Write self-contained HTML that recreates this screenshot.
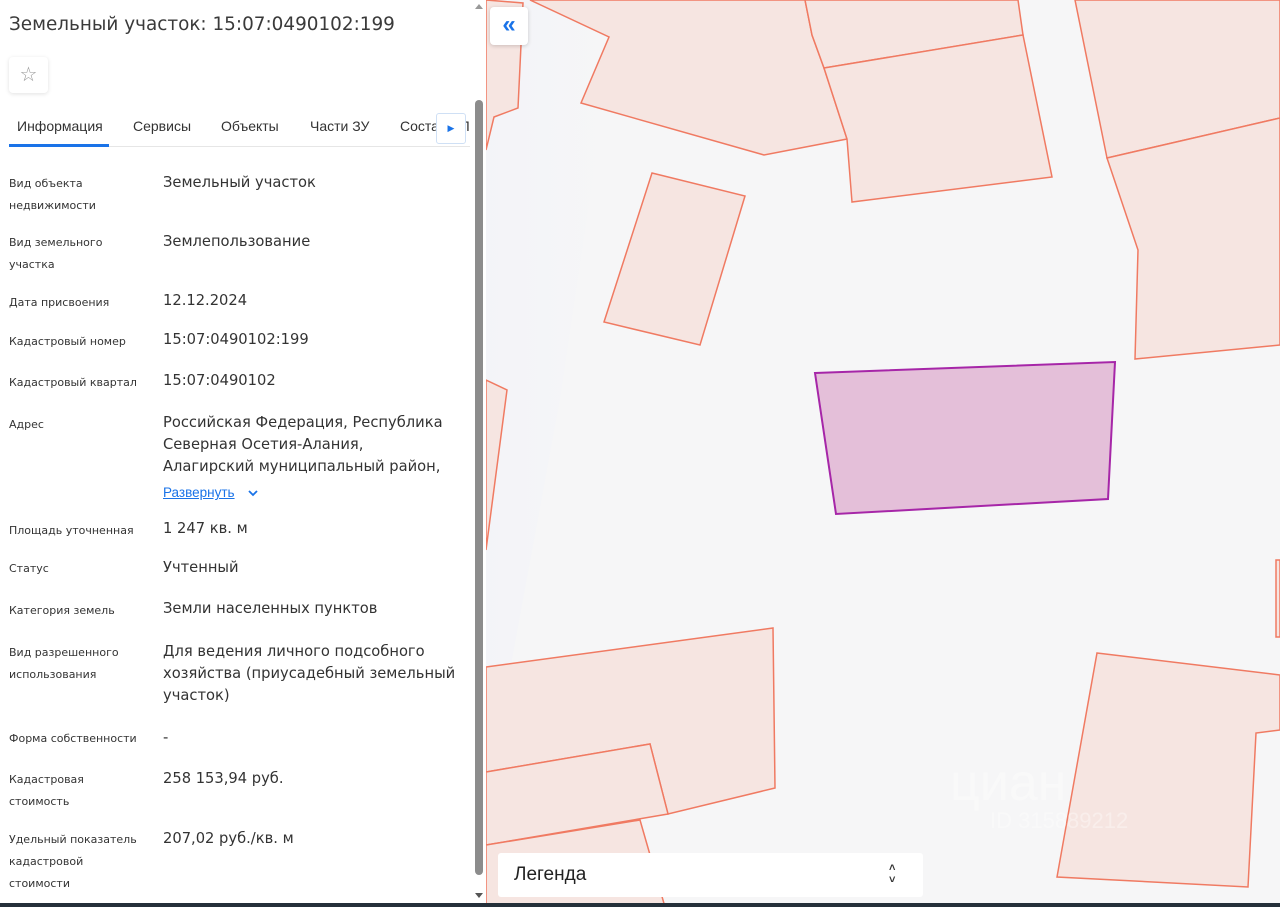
<!DOCTYPE html>
<html><head><meta charset="utf-8"><style>
*{margin:0;padding:0;box-sizing:border-box}
body{width:1280px;height:907px;overflow:hidden;position:relative;background:#f6f6f7;font-family:"Liberation Sans",Arial,sans-serif;color:#333}
#map{position:absolute;left:486px;top:0}
#panel{position:absolute;left:0;top:0;width:486px;height:907px;background:#fff}
.t{position:absolute;white-space:nowrap;line-height:22px}
.l{font-size:11px;color:#333;left:9px;font-family:"DejaVu Sans",sans-serif}
.v{font-size:14.7px;color:#333;left:163px;font-family:"DejaVu Sans",sans-serif}
</style></head><body>
<svg id="map" width="794" height="907" viewBox="486 0 794 907">
<defs><linearGradient id="g" x1="0" x2="1"><stop offset="0" stop-color="#eef0fa"/><stop offset="1" stop-color="#f6f6f7"/></linearGradient></defs>
<rect x="486" y="0" width="794" height="907" fill="#f6f6f7"/>
<polygon points="486,0 620,0 560,400 486,800" fill="url(#g)" opacity="0.35"/>
<g fill="#f6e5e1" stroke="#f07a62" stroke-width="1.5">
<polygon points="486,0 523,3 518,108 494,117 486,150"/>
<polygon points="530,0 805,0 812,35 824,68 847,139 764,155 581,103 609,37"/>
<polygon points="805,0 1018,0 1023,35 824,68 812,35"/>
<polygon points="824,68 1023,35 1052,177 852,202 847,139"/>
<polygon points="1075,0 1280,0 1280,118 1107,158"/>
<polygon points="1107,158 1280,118 1280,345 1135,359 1138,250"/>
<polygon points="652,173 745,196 700,345 604,322"/>
<polygon points="486,380 507,390 486,550"/>
<polygon points="486,667 773,628 775,788 668,814 650,744 486,772"/>
<polygon points="486,772 650,744 668,814 486,845"/>
<polygon points="486,845 640,820 665,907 486,907"/>
<polygon points="1097,653 1280,675 1280,730 1256,733 1248,887 1057,877"/>
<polygon points="1276,560 1280,560 1280,637 1276,637"/>
</g>
<polygon points="815,373 1115,362 1108,499 836,514" fill="#e4bfd9" stroke="#a626a8" stroke-width="2"/>
<text x="950" y="800" font-size="52" fill="#ffffff" opacity="0.35" font-family="Liberation Sans">циан</text>
<text x="990" y="828" font-size="22" fill="#ffffff" opacity="0.35" font-family="Liberation Sans">ID 315889212</text>
</svg>
<div style="position:absolute;left:490px;top:7px;width:38px;height:38px;background:#fff;border-radius:4px;box-shadow:0 1px 4px rgba(0,0,0,.18);color:#1a73e8;font-size:24px;line-height:36px;text-align:center;font-weight:bold">«</div>
<div style="position:absolute;left:498px;top:853px;width:425px;height:44px;background:#fff;border-radius:3px"></div>
<div class="t" style="left:514px;top:864px;font-size:19px;color:#222">Легенда</div>
<div class="t" style="left:889px;top:862px;font-size:11px;line-height:12px;color:#333;font-weight:bold">˄<br>˅</div>
<div id="panel">
<div class="t" style="left:9px;top:14px;font-size:18.4px;color:#3a3a3a;font-family:'DejaVu Sans',sans-serif">Земельный участок: 15:07:0490102:199</div>
<div style="position:absolute;left:9px;top:57px;width:39px;height:36px;border-radius:4px;box-shadow:0 1px 4px rgba(0,0,0,.12);text-align:center;line-height:36px;font-size:20px;color:#999">☆</div>
<div class="t" style="left:17px;top:115px;font-size:14px">Информация</div>
<div class="t" style="left:133px;top:115px;font-size:14px">Сервисы</div>
<div class="t" style="left:221px;top:115px;font-size:14px">Объекты</div>
<div class="t" style="left:310px;top:115px;font-size:14px">Части ЗУ</div>
<div class="t" style="left:400px;top:115px;font-size:14px;width:70px;overflow:hidden">Состав ЕП</div>
<div style="position:absolute;left:436px;top:113px;width:30px;height:31px;background:#fff;border:1px solid #cfe0f5;border-radius:3px;color:#1a73e8;font-size:9px;text-align:center;line-height:29px">▶</div>
<div style="position:absolute;left:9px;top:146px;width:461px;height:1px;background:#e6e6e6"></div>
<div style="position:absolute;left:9px;top:144px;width:100px;height:3px;background:#1a73e8"></div>
<div style="position:absolute;left:473px;top:0;width:13px;height:907px;background:#fff"></div>
<div style="position:absolute;left:475px;top:100px;width:8px;height:775px;background:#8c8c8c;border-radius:4px"></div>
<div style="position:absolute;left:475px;top:4px;width:0;height:0;border-left:4px solid transparent;border-right:4px solid transparent;border-bottom:5px solid #999"></div>
<div style="position:absolute;left:475px;top:893px;width:0;height:0;border-left:4px solid transparent;border-right:4px solid transparent;border-top:5px solid #555"></div>

<div class="t l" style="top:173px">Вид объекта<br>недвижимости</div><div class="t v" style="top:172px">Земельный участок</div>
<div class="t l" style="top:232px">Вид земельного<br>участка</div><div class="t v" style="top:231px">Землепользование</div>
<div class="t l" style="top:292px">Дата присвоения</div><div class="t v" style="top:290px">12.12.2024</div>
<div class="t l" style="top:331px">Кадастровый номер</div><div class="t v" style="top:329px">15:07:0490102:199</div>
<div class="t l" style="top:372px">Кадастровый квартал</div><div class="t v" style="top:370px">15:07:0490102</div>
<div class="t l" style="top:414px">Адрес</div><div class="t v" style="top:412px">Российская Федерация, Республика<br>Северная Осетия-Алания,<br>Алагирский муниципальный район,</div>
<div class="t" style="left:163px;top:482px;font-size:13.5px;color:#1a73e8;text-decoration:underline">Развернуть</div>
<svg style="position:absolute;left:247px;top:489px" width="12" height="8"><path d="M2 2l4 4 4-4" fill="none" stroke="#1a73e8" stroke-width="1.8"/></svg>
<div class="t l" style="top:520px">Площадь уточненная</div><div class="t v" style="top:518px">1 247 кв. м</div>
<div class="t l" style="top:558px">Статус</div><div class="t v" style="top:557px">Учтенный</div>
<div class="t l" style="top:600px">Категория земель</div><div class="t v" style="top:598px">Земли населенных пунктов</div>
<div class="t l" style="top:642px">Вид разрешенного<br>использования</div><div class="t v" style="top:641px">Для ведения личного подсобного<br>хозяйства (приусадебный земельный<br>участок)</div>
<div class="t l" style="top:728px">Форма собственности</div><div class="t v" style="top:727px">-</div>
<div class="t l" style="top:769px">Кадастровая<br>стоимость</div><div class="t v" style="top:768px">258 153,94 руб.</div>
<div class="t l" style="top:829px">Удельный показатель<br>кадастровой<br>стоимости</div><div class="t v" style="top:828px">207,02 руб./кв. м</div>
</div>
<div style="position:absolute;left:0;top:903px;width:1280px;height:4px;background:#25303a"></div>
</body></html>
